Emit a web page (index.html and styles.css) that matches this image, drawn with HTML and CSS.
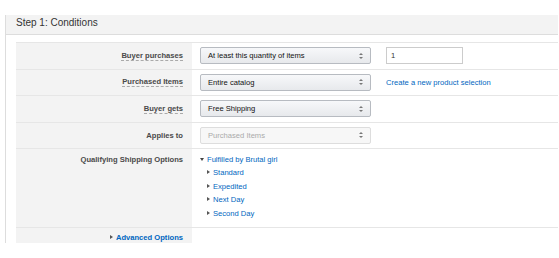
FILE: index.html
```html
<!DOCTYPE html>
<html lang="en">
  <head>
    <meta charset="UTF-8" />
    <title>Step 1: Conditions</title>
    <link rel="stylesheet" href="styles.css">
  </head>
  <body>
    <section class="panel">
      <header class="panel-head">Step 1: Conditions</header>
      <div class="panel-body">
        <div class="cond-row">
          <div class="cond-label"><span class="hint">Buyer purchases</span></div>
          <div class="cond-value">
            <div class="select">
              <span>At least this quantity of items</span>
              <svg class="arrows" width="4" height="6" viewBox="0 0 4 6"><path d="M2 0 L4 2 L0 2 Z M2 6 L4 4 L0 4 Z" fill="#777"/></svg>
            </div>
            <div class="text-input">1</div>
          </div>
        </div>
        <div class="cond-row">
          <div class="cond-label"><span class="hint">Purchased Items</span></div>
          <div class="cond-value">
            <div class="select">
              <span>Entire catalog</span>
              <svg class="arrows" width="4" height="6" viewBox="0 0 4 6"><path d="M2 0 L4 2 L0 2 Z M2 6 L4 4 L0 4 Z" fill="#777"/></svg>
            </div>
            <a class="link" href="#">Create a new product selection</a>
          </div>
        </div>
        <div class="cond-row">
          <div class="cond-label"><span class="hint">Buyer gets</span></div>
          <div class="cond-value">
            <div class="select">
              <span>Free Shipping</span>
              <svg class="arrows" width="4" height="6" viewBox="0 0 4 6"><path d="M2 0 L4 2 L0 2 Z M2 6 L4 4 L0 4 Z" fill="#777"/></svg>
            </div>
          </div>
        </div>
        <div class="cond-row">
          <div class="cond-label">Applies to</div>
          <div class="cond-value">
            <div class="select disabled">
              <span>Purchased Items</span>
              <svg class="arrows" width="4" height="6" viewBox="0 0 4 6"><path d="M2 0 L4 2 L0 2 Z M2 6 L4 4 L0 4 Z" fill="#777"/></svg>
            </div>
          </div>
        </div>
        <div class="cond-row tall">
          <div class="cond-label">Qualifying Shipping Options</div>
          <div class="cond-value">
            <ul class="tree">
              <li class="open"><a class="link" href="#">Fulfilled by Brutal girl</a>
                <ul>
                  <li><a class="link" href="#">Standard</a></li>
                  <li><a class="link" href="#">Expedited</a></li>
                  <li><a class="link" href="#">Next Day</a></li>
                  <li><a class="link" href="#">Second Day</a></li>
                </ul>
              </li>
            </ul>
          </div>
        </div>
        <div class="cond-row last">
          <div class="cond-label"><a class="link advanced" href="#">Advanced Options</a></div>
          <div class="cond-value"></div>
        </div>
      </div>
    </section>
  </body>
</html>
```

FILE: styles.css
```css
* {
  box-sizing: border-box;
}
body {
  margin: 0;
  background: #fff;
  font-family: "Liberation Sans", Arial, sans-serif;
  font-size: 7.6px;
  color: #111;
}
.panel {
  margin: 15px 0 0 5px;
  width: 553px;
  border-left: 1px solid #ddd;
}
.panel-head {
  height: 20px;
  padding: 0 10px;
  background: #f3f3f3;
  border-bottom: 1px solid #ddd;
  font-size: 10px;
  line-height: 16px;
  color: #333;
}
.panel-body {
  margin-top: 7px;
  padding-left: 10px;
}
.cond-row {
  display: grid;
  grid-template-columns: 176px 1fr;
  height: 26.5px;
  border-top: 1px solid #e6e6e6;
}
.cond-row.tall {
  height: 79px;
}
.cond-row.last {
  height: 16px;
}
.cond-label {
  background: #f3f3f3;
  padding-right: 9px;
  text-align: right;
  font-weight: bold;
  color: #4a4a4a;
  display: flex;
  align-items: center;
  justify-content: flex-end;
}
.cond-value {
  display: flex;
  align-items: center;
  padding-left: 8px;
}
.tall .cond-label,
.tall .cond-value,
.last .cond-label {
  align-items: flex-start;
  padding-top: 4px;
  line-height: 13.4px;
}
.last .cond-label {
  padding-top: 3px;
}
.hint {
  border-bottom: 1px dashed #aaa;
  line-height: 9px;
}
.select {
  width: 171px;
  height: 17px;
  padding: 0 7px 0 7px;
  display: flex;
  align-items: center;
  justify-content: space-between;
  border: 1px solid #b7bbc1;
  border-radius: 2px;
  background: linear-gradient(#f7f8fa, #e7e9ec);
  color: #111;
}
.select.disabled {
  border-color: #ddd;
  background: #f7f7f7;
  color: #aaa;
}
.text-input {
  width: 77px;
  height: 17px;
  margin-left: 15px;
  padding-left: 4px;
  border: 1px solid #ccc;
  background: #fff;
  line-height: 15px;
  color: #333;
}
.link {
  color: #0066c0;
  text-decoration: none;
}
.cond-value > .link {
  margin-left: 15px;
}
.advanced {
  font-weight: bold;
}
.advanced::before,
.tree ul li::before {
  content: "";
  display: inline-block;
  border-left: 3px solid #555;
  border-top: 2px solid transparent;
  border-bottom: 2px solid transparent;
  margin-right: 3px;
  vertical-align: 1px;
}
.tree,
.tree ul {
  list-style: none;
  margin: 0;
  padding: 0;
}
.tree ul {
  padding-left: 7px;
}
.tree li.open::before {
  content: "";
  display: inline-block;
  border-top: 3px solid #444;
  border-left: 2px solid transparent;
  border-right: 2px solid transparent;
  margin-right: 3px;
  vertical-align: 1px;
}
```
